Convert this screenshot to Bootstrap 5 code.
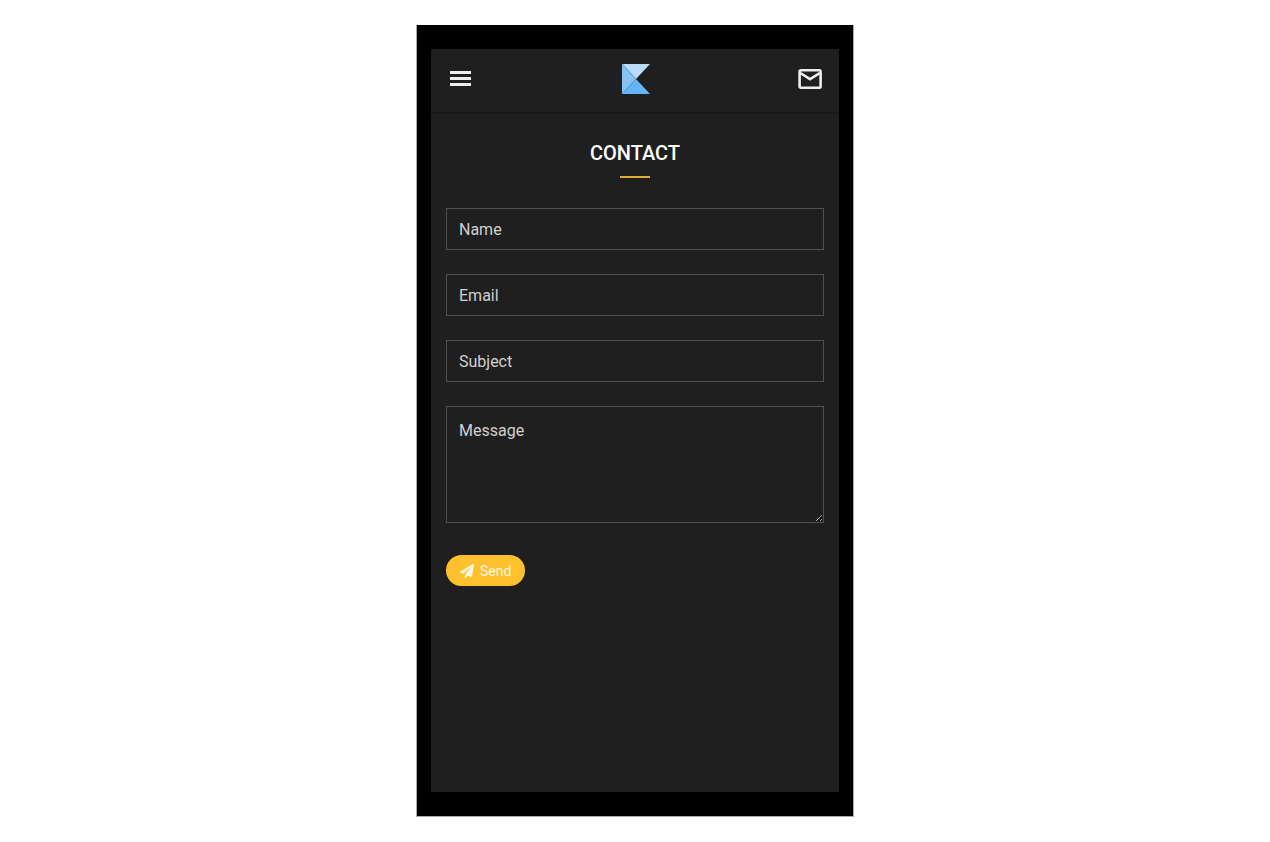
<!DOCTYPE html>
<html lang="en">
<head>
<meta charset="utf-8">
<meta name="viewport" content="width=device-width, initial-scale=1">
<title>Contact</title>
<link href="https://cdn.jsdelivr.net/npm/bootstrap@5.3.0/dist/css/bootstrap.min.css" rel="stylesheet">
<style>
  body { background: #fff; font-family: Roboto, sans-serif; padding: 25px 0; }
  .phone { width: 100%; max-width: 438px; background: #000; padding: 24px 14px; border: 1px solid #aaa; border-width: 0 1px 1px; }
  .phone-screen { background: #1f1f1f; color: #fff; }
  .topbar { height: 65px; padding: 0 16px 3px; border-bottom: 2px solid #181818; }
  .icon-btn { color: #eee; line-height: 0; }
  .contact-area { padding: 24px 15px; }
  .contact-title { font-size: 20px; line-height: 30px; font-weight: 500; margin: 0; }
  .title-rule { width: 30px; height: 2px; margin: 8px auto 30px; background: #e0ac35; }
  .contact-form { gap: 24px; }
  .field, .field:focus { background: transparent; color: #ddd; border: 1px solid #505050; border-radius: 0; padding: 8px 12px; font-size: 16px; line-height: 24px; box-shadow: none; color-scheme: dark; }
  .field { height: 42px; }
  .field:focus { border-color: #ffc02d; }
  .field::placeholder { color: #d2d0d0; opacity: 1; }
  textarea.field { height: 117px; padding-top: 12px; }
  .send-btn, .send-btn:hover { background: #ffc02d; color: #fff9e6; }
  .send-btn { height: 31px; margin-top: 8px; padding: 0 14px; font-size: 14px; line-height: 20px; gap: 6px; border: 0; }
</style>
</head>
<body class="min-vh-100 d-flex justify-content-center">
<main class="phone d-flex flex-column">
  <div class="phone-screen flex-grow-1">
    <header class="topbar d-flex align-items-center justify-content-between">
      <button type="button" class="icon-btn btn p-0 border-0" aria-label="Open menu">
        <svg width="28" height="28" viewBox="0 0 28 28" fill="currentColor"><path d="M3 6h21v3H3zM3 12h21v3H3zM3 18h21v3H3z"/></svg>
      </button>
      <a href="#" aria-label="Home" class="icon-btn">
        <svg width="28" height="30" viewBox="0 0 28 30"><path fill="#b9dcfb" d="M0 0h28L14 15z"/><path fill="#86c3f5" d="M0 0l14 15L0 30z"/><path fill="#64b5f6" d="M14 15l14 15H0z"/><path d="M0 0l14 15L0 30" fill="none" stroke="#5b9bd0" stroke-width=".7"/></svg>
      </a>
      <a href="#contact" aria-label="Mail" class="icon-btn">
        <svg width="26" height="28" viewBox="0 0 26 28" fill="none" stroke="currentColor" stroke-width="2.6"><rect x="2.600" y="5.300" width="21" height="17.400" rx="1.200"/><path d="M3.300 8l9.800 6.200L22.800 8"/></svg>
      </a>
    </header>
    <section id="contact" class="contact-area">
      <h1 class="contact-title text-center">CONTACT</h1>
      <div class="title-rule"></div>
      <form class="contact-form d-flex flex-column">
        <input class="form-control field" type="text" placeholder="Name" aria-label="Name">
        <input class="form-control field" type="email" placeholder="Email" aria-label="Email">
        <input class="form-control field" type="text" placeholder="Subject" aria-label="Subject">
        <textarea class="form-control field" placeholder="Message" aria-label="Message"></textarea>
        <button type="submit" class="btn send-btn rounded-pill d-inline-flex align-items-center align-self-start">
          <svg width="14" height="14" viewBox="0 0 512 512" fill="currentColor" aria-hidden="true"><path d="M476 3.200L12.500 270.600c-18.100 10.400-15.800 35.600 2.200 43.200L121 358.400l287.300-253.200c5.500-4.900 13.300 2.600 8.600 8.300L176 407v80.500c0 23.600 28.500 32.900 42.500 15.800L282 426l124.600 52.200c14.200 6 30.400-2.900 33-18.200l72-432C515 7.800 493.300-6.800 476 3.200z"/></svg>
          Send
        </button>
      </form>
    </section>
  </div>
</main>
<script src="https://cdn.jsdelivr.net/npm/bootstrap@5.3.0/dist/js/bootstrap.bundle.min.js"></script>
</body>
</html>
